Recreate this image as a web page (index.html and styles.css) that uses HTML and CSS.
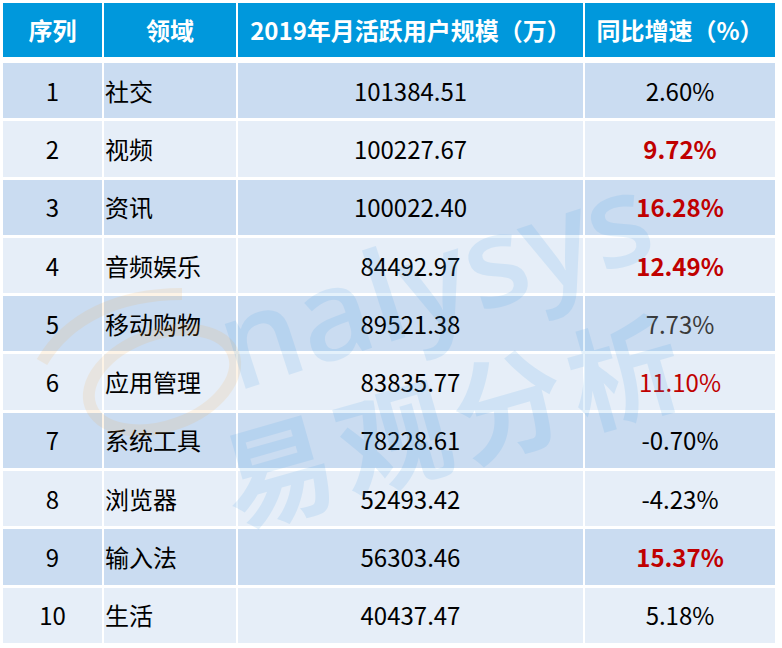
FILE: index.html
```html
<!DOCTYPE html>
<html lang="zh-CN">
<head>
<meta charset="utf-8">
<title>2019年月活跃用户规模</title>
<link rel="stylesheet" href="styles.css">
</head>
<body>
<div class="sheet">
  <div class="table">
    <div class="row head">
      <div class="cell c">序列</div>
      <div class="cell c">领域</div>
      <div class="cell c">2019年月活跃用户规模（万）</div>
      <div class="cell c">同比增速（%）</div>
    </div>
    <div class="row dark">
      <div class="cell c">1</div><div class="cell l">社交</div><div class="cell c">101384.51</div><div class="cell c">2.60%</div>
    </div>
    <div class="row light">
      <div class="cell c">2</div><div class="cell l">视频</div><div class="cell c">100227.67</div><div class="cell c red b">9.72%</div>
    </div>
    <div class="row dark">
      <div class="cell c">3</div><div class="cell l">资讯</div><div class="cell c">100022.40</div><div class="cell c red b">16.28%</div>
    </div>
    <div class="row light">
      <div class="cell c">4</div><div class="cell l">音频娱乐</div><div class="cell c">84492.97</div><div class="cell c red b">12.49%</div>
    </div>
    <div class="row dark">
      <div class="cell c">5</div><div class="cell l">移动购物</div><div class="cell c">89521.38</div><div class="cell c grey">7.73%</div>
    </div>
    <div class="row light">
      <div class="cell c">6</div><div class="cell l">应用管理</div><div class="cell c">83835.77</div><div class="cell c red">11.10%</div>
    </div>
    <div class="row dark">
      <div class="cell c">7</div><div class="cell l">系统工具</div><div class="cell c">78228.61</div><div class="cell c">-0.70%</div>
    </div>
    <div class="row light">
      <div class="cell c">8</div><div class="cell l">浏览器</div><div class="cell c">52493.42</div><div class="cell c">-4.23%</div>
    </div>
    <div class="row dark">
      <div class="cell c">9</div><div class="cell l">输入法</div><div class="cell c">56303.46</div><div class="cell c red b">15.37%</div>
    </div>
    <div class="row light">
      <div class="cell c">10</div><div class="cell l">生活</div><div class="cell c">40437.47</div><div class="cell c">5.18%</div>
    </div>
  </div>
  <svg class="wm" viewBox="0 0 782 648" width="782" height="648" aria-hidden="true">
    <g class="wm-ring">
      <ellipse cx="162" cy="380" rx="76" ry="46" transform="rotate(-20 162 380)"/>
      <path d="M42 362 C68 318 118 294 182 294"/>
    </g>
    <text class="wm-latin" x="236" y="392" transform="rotate(-18 236 392)">nalysys</text>
    <text class="wm-cjk" x="236" y="528" transform="rotate(-16 236 528)">易观分析</text>
  </svg>
</div>
</body>
</html>
```
FILE: styles.css
```css
html, body {
  margin: 0;
  padding: 0;
  background: #ffffff;
}

.sheet {
  position: relative;
  width: 782px;
  height: 648px;
  overflow: hidden;
}

.table {
  padding: 3px 0 0 3px;
  width: 772px;
  display: flex;
  flex-direction: column;
  gap: 3px;
  font-family: "Noto Sans CJK SC", "Noto Sans", sans-serif;
  font-size: 24px;
  color: #000000;
}

.row {
  display: grid;
  grid-template-columns: 99px 132px 345px 190px;
  column-gap: 2px;
  height: 55.3px;
}

.row.head {
  height: 54px;
  margin-bottom: 3px;
}

.row.head .cell {
  background: #0098dc;
  color: #ffffff;
  font-weight: 700;
}

.row.dark .cell {
  background: #cadcf1;
}

.row.light .cell {
  background: #e6eef8;
}

.cell {
  display: flex;
  align-items: center;
  white-space: nowrap;
  line-height: 1;
}

.cell.c {
  justify-content: center;
}

.cell.l {
  justify-content: flex-start;
  padding-left: 1px;
}

.red {
  color: #c00000;
}

.b {
  font-weight: 700;
}

.grey {
  color: #3a3a3a;
}

.wm {
  position: absolute;
  left: 0;
  top: 0;
  pointer-events: none;
}

.wm-ring {
  fill: none;
  stroke: #f5a53a;
  stroke-width: 12;
  opacity: 0.12;
}

.wm-latin {
  font-family: "Open Sans", "Noto Sans", sans-serif;
  font-weight: 600;
  font-size: 126px;
  fill: #3a9ae4;
  opacity: 0.13;
}

.wm-cjk {
  font-family: "Noto Sans CJK SC", sans-serif;
  font-weight: 700;
  font-size: 112px;
  letter-spacing: 8px;
  fill: #3a9ae4;
  opacity: 0.13;
}
```
